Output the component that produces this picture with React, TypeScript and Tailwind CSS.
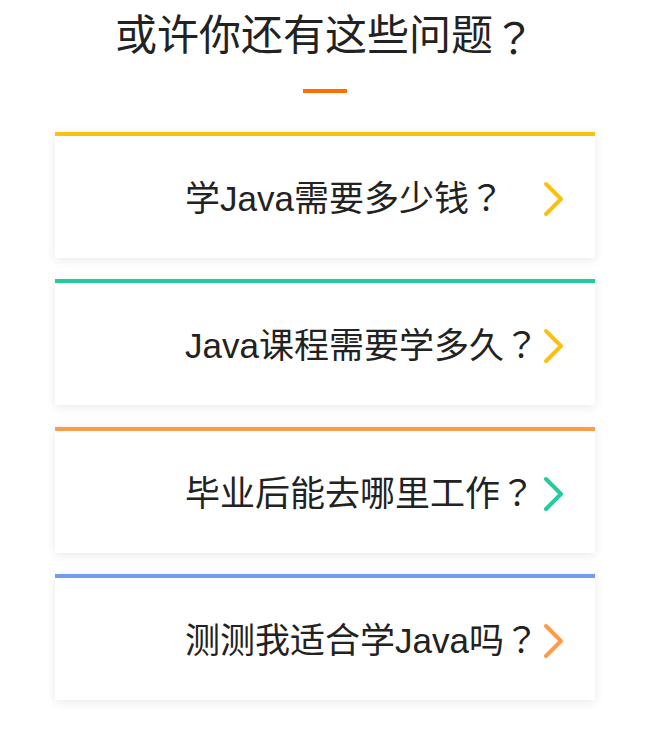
const questions = [
  { text: '学Java需要多少钱', bar: 'border-[#fcc10f]', arrow: '#fcc10f' },
  { text: 'Java课程需要学多久', bar: 'border-[#22cc9e]', arrow: '#fcc10f' },
  { text: '毕业后能去哪里工作', bar: 'border-[#ff9a48]', arrow: '#22cc9e' },
  { text: '测测我适合学Java吗', bar: 'border-[#6f9df2]', arrow: '#ff9a48' },
];

// full-width question mark, centered in its box like the original font
const Q = () => <span className="font-['Noto_Sans_CJK_TC',sans-serif]">？</span>;

const Chevron = ({ color }: { color: string }) => (
  <svg width="26" height="36" viewBox="0 0 26 36" fill="none">
    <path d="M5 3 L20 18 L5 33" stroke={color} strokeWidth="4" strokeLinecap="round" strokeLinejoin="round" />
  </svg>
);

export default function App() {
  return (
    <div className="w-[650px] bg-white pb-10 font-['Liberation_Sans','Noto_Sans_CJK_SC',sans-serif] text-[#222]">
      {/* heading */}
      <div className="flex flex-col items-center pt-[8px]">
        <h1 className="flex h-[56px] items-center whitespace-nowrap text-[42px] leading-none">
          或许你还有这些问题
          <Q />
        </h1>
        <div className="mt-[25px] h-[4px] w-[44px] bg-[#ff6f00]" />
      </div>

      {/* question cards */}
      <div className="mx-auto mt-[39px] flex w-[540px] flex-col gap-[21.33px]">
        {questions.map((q) => (
          <div
            key={q.text}
            className={`flex h-[126px] items-center border-t-4 bg-white shadow-[0_2px_10px_rgba(0,0,0,0.09)] ${q.bar}`}
          >
            <span className="flex-1 whitespace-nowrap pl-[130px] text-[35px] leading-none">
              {q.text}
              <Q />
            </span>
            <div className="mr-[28px] mt-[4px]">
              <Chevron color={q.arrow} />
            </div>
          </div>
        ))}
      </div>
    </div>
  );
}
